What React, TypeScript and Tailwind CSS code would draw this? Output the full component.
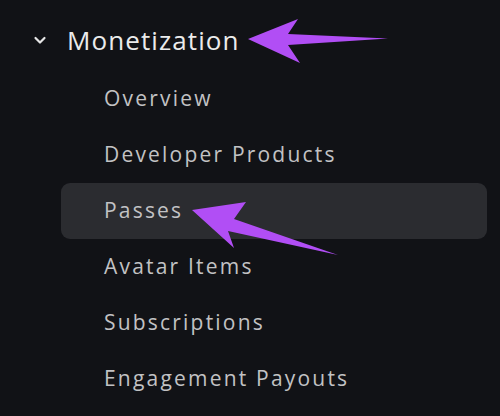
import React from "react";

const items = [
  "Overview",
  "Developer Products",
  "Passes",
  "Avatar Items",
  "Subscriptions",
  "Engagement Payouts",
];

export default function App() {
  return (
    <div
      className="relative w-[500px] h-[416px] overflow-hidden bg-[#111216]"
      style={{ fontFamily: '"Open Sans", "Noto Sans", sans-serif' }}
    >
      <div className="pt-[12px]">
        <div className="flex items-center h-[56px] pl-[33px]">
          <svg width="14" height="14" viewBox="0 0 14 14" className="mr-[20px]">
            <path d="M2.5 5 L7 9.5 L11.5 5" fill="none" stroke="#e6e6e6" strokeWidth="2.2" strokeLinecap="round" strokeLinejoin="round" />
          </svg>
          <span className="text-[26px] text-[#ebebeb] tracking-[1.1px]">Monetization</span>
        </div>
        <div className="mt-[3px] flex flex-col">
          {items.map((it) => (
            <div
              key={it}
              className={
                "ml-[61px] w-[426px] h-[56px] flex items-center pl-[43px] rounded-[9px] " +
                (it === "Passes" ? "bg-[#2b2c30]" : "")
              }
            >
              <span className="text-[21px] text-[#c2c2c4] tracking-[2.2px]">{it}</span>
            </div>
          ))}
        </div>
      </div>
      <svg className="absolute inset-0 pointer-events-none" width="500" height="416" viewBox="0 0 500 416">
        <polygon points="248,39 298,19 288,34 388,38.5 288,45 300,63" fill="#b14ef5" />
        <polygon points="192,210 246,202 234,219 338,255 228,231 234,248" fill="#b14ef5" />
      </svg>
    </div>
  );
}
